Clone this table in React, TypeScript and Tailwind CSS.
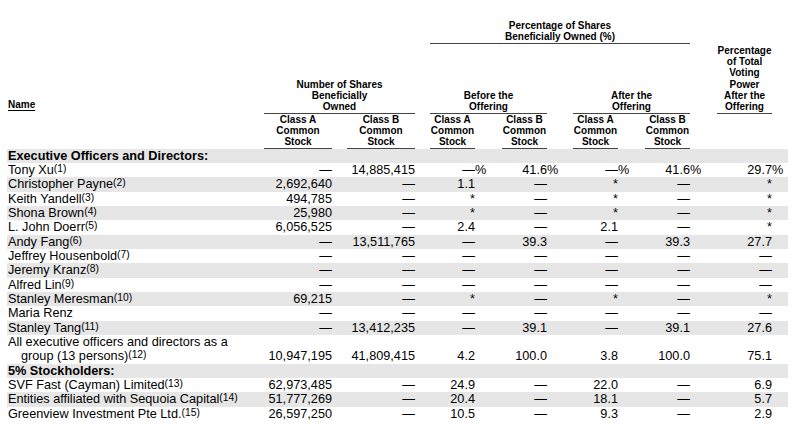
import React from "react";

const COLS =
  "grid grid-cols-[257px_68px_15px_68px_15px_45px_27px_45px_26px_45px_27px_45px_27px_55px_16px]";

type Row = {
  name: string;
  fn?: string;
  vals?: string[];
  pct?: boolean;
  section?: boolean;
  twoLine?: boolean;
};

const D = "—";

const rows: Row[] = [
  { name: "Executive Officers and Directors:", section: true },
  { name: "Tony Xu", fn: "1", vals: [D, "14,885,415", D, "41.6", D, "41.6", "29.7"], pct: true },
  { name: "Christopher Payne", fn: "2", vals: ["2,692,640", D, "1.1", D, "*", D, "*"] },
  { name: "Keith Yandell", fn: "3", vals: ["494,785", D, "*", D, "*", D, "*"] },
  { name: "Shona Brown", fn: "4", vals: ["25,980", D, "*", D, "*", D, "*"] },
  { name: "L. John Doerr", fn: "5", vals: ["6,056,525", D, "2.4", D, "2.1", D, "*"] },
  { name: "Andy Fang", fn: "6", vals: [D, "13,511,765", D, "39.3", D, "39.3", "27.7"] },
  { name: "Jeffrey Housenbold", fn: "7", vals: [D, D, D, D, D, D, D] },
  { name: "Jeremy Kranz", fn: "8", vals: [D, D, D, D, D, D, D] },
  { name: "Alfred Lin", fn: "9", vals: [D, D, D, D, D, D, D] },
  { name: "Stanley Meresman", fn: "10", vals: ["69,215", D, "*", D, "*", D, "*"] },
  { name: "Maria Renz", vals: [D, D, D, D, D, D, D] },
  { name: "Stanley Tang", fn: "11", vals: [D, "13,412,235", D, "39.1", D, "39.1", "27.6"] },
  {
    name: "group (13 persons)",
    fn: "12",
    twoLine: true,
    vals: ["10,947,195", "41,809,415", "4.2", "100.0", "3.8", "100.0", "75.1"],
  },
  { name: "5% Stockholders:", section: true },
  { name: "SVF Fast (Cayman) Limited", fn: "13", vals: ["62,973,485", D, "24.9", D, "22.0", D, "6.9"] },
  { name: "Entities affiliated with Sequoia Capital", fn: "14", vals: ["51,777,269", D, "20.4", D, "18.1", D, "5.7"] },
  { name: "Greenview Investment Pte Ltd.", fn: "15", vals: ["26,597,250", D, "10.5", D, "9.3", D, "2.9"] },
];

function Header() {
  const h = "text-[10px] font-bold leading-[11.35px] text-center";
  const line = "border-b border-[#444]";
  return (
    <div className={`${COLS} ${h}`}>
      {/* top group */}
      <div className={`row-start-1 col-start-6 col-span-7 pt-[20px] ${line}`}>
        Percentage of Shares
        <br />
        Beneficially Owned (%)
      </div>

      {/* second level */}
      <div className="row-start-2 col-start-1 self-end text-left pl-px mb-[3px]">
        <span className="underline underline-offset-[2px]">Name</span>
      </div>
      <div className={`row-start-2 col-start-2 col-span-3 self-end ${line}`}>
        Number of Shares
        <br />
        Beneficially
        <br />
        Owned
      </div>
      <div className={`row-start-2 col-start-6 col-span-3 self-end ${line}`}>
        Before the
        <br />
        Offering
      </div>
      <div className={`row-start-2 col-start-10 col-span-3 self-end ${line}`}>
        After the
        <br />
        Offering
      </div>
      <div className={`row-start-2 col-start-14 self-end pt-px ${line}`}>
        Percentage
        <br />
        of Total
        <br />
        Voting
        <br />
        Power
        <br />
        After the
        <br />
        Offering
      </div>

      {/* class headers */}
      {["col-start-2", "col-start-4", "col-start-6", "col-start-8", "col-start-10", "col-start-12"].map((c) => (
        <div key={c} className={`row-start-3 ${c} ${line}`}>
          Class {c === "col-start-2" || c === "col-start-6" || c === "col-start-10" ? "A" : "B"}
          <br />
          Common
          <br />
          Stock
        </div>
      ))}
    </div>
  );
}

function Fn({ n }: { n: string }) {
  return <span className="text-[10.3px] leading-none align-[2.5px]">({n})</span>;
}

function BodyRow({ r, gray }: { r: Row; gray: boolean }) {
  const bg = gray ? "bg-[#e6e6e6]" : "";
  if (r.section) {
    return (
      <div className={`${bg} pl-px font-bold`}>{r.name}</div>
    );
  }
  const v = r.vals ?? [];
  const s = r.pct ? "%" : "";
  return (
    <div className={`${COLS} ${bg} items-end`}>
      <div className="pl-px whitespace-nowrap">
        {r.twoLine ? (
          <>
            All executive officers and directors as a
            <br />
            <span className="pl-[13px]">
              {r.name}
              {r.fn && <Fn n={r.fn} />}
            </span>
          </>
        ) : (
          <>
            {r.name}
            {r.fn && <Fn n={r.fn} />}
          </>
        )}
      </div>
      <div className="text-right">{v[0]}</div>
      <div />
      <div className="text-right">{v[1]}</div>
      <div />
      <div className="text-right">{v[2]}</div>
      <div>{s}</div>
      <div className="text-right">{v[3]}</div>
      <div>{s}</div>
      <div className="text-right">{v[4]}</div>
      <div>{s}</div>
      <div className="text-right">{v[5]}</div>
      <div>{s}</div>
      <div className="text-right">{v[6]}</div>
      <div>{s}</div>
    </div>
  );
}

export default function App() {
  return (
    <div className="w-[800px] h-[424px] overflow-hidden bg-white text-black font-['Liberation_Sans',Arial,Helvetica,sans-serif]">
      <div className="w-[781px] ml-[7px]">
        <Header />
        <div className="text-[12.7px] leading-[14.33px]">
          {rows.map((r, i) => (
            <BodyRow key={i} r={r} gray={i % 2 === 0} />
          ))}
        </div>
      </div>
    </div>
  );
}
